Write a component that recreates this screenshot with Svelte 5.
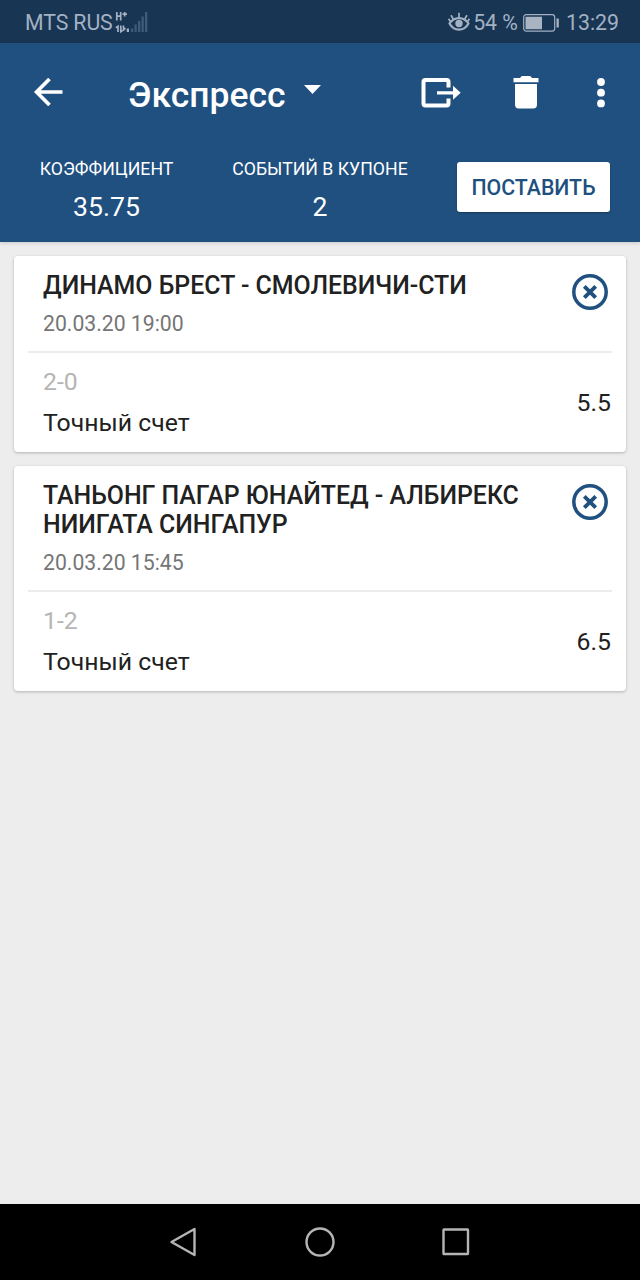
<script lang="ts">
  type Bet = {
    id: number;
    match: string;
    date: string;
    outcome: string;
    market: string;
    odds: number;
  };

  let bets: Bet[] = $state([
    {
      id: 1,
      match: 'ДИНАМО БРЕСТ - СМОЛЕВИЧИ-СТИ',
      date: '20.03.20 19:00',
      outcome: '2-0',
      market: 'Точный счет',
      odds: 5.5
    },
    {
      id: 2,
      match: 'ТАНЬОНГ ПАГАР ЮНАЙТЕД - АЛБИРЕКС НИИГАТА СИНГАПУР',
      date: '20.03.20 15:45',
      outcome: '1-2',
      market: 'Точный счет',
      odds: 6.5
    }
  ]);

  // An express pays the product of all its odds.
  let total = $derived(bets.reduce((acc, bet) => acc * bet.odds, 1));

  function remove(id: number) {
    bets = bets.filter((bet) => bet.id !== id);
  }
</script>

<div class="screen">
  <div class="status">
    <span class="carrier">MTS RUS</span>
    <svg class="signal" width="33" height="22" viewBox="0 0 33 22" aria-hidden="true">
      <g fill="none" stroke="#a3b1c3" stroke-width="1.7">
        <path d="M1.800 1v8.500M5.700 1v8.500M1.800 5.200h4M7.500 3.200h4.500M9.700 1v4.500" />
        <path d="M.8 16.700l2.200-1.400v5.700M5.800 14.500v6.200l1.700-1.200M8.500 14.500v5.500M8.500 17l2 1" />
      </g>
      <path d="M11.700 17.500h2.300v3.500h-2.300z" fill="#a3b1c3" />
      <path
        d="M16 17.500h2.200v3.500h-2.200zM19.500 13.500h2.200v7.500h-2.200zM23 10h2.300v11h-2.300zM26.500 5.500h2.300v15.500h-2.300zM30 1h2.300v20h-2.300z"
        fill="#3f5b79"
      />
    </svg>
    <span class="spacer"></span>
    <svg class="eye" width="22" height="20" viewBox="0 0 22 20" aria-hidden="true">
      <g fill="none" stroke="#a3b1c3" stroke-width="2.200">
        <path d="M1.500 11.500C6 4.200 16 4.200 20.500 11.500C16 19.700 6 19.700 1.500 11.500z" />
        <path d="M11 5.500V.8M5.300 7L3 3.200M16.700 7L19 3.200M2.500 9.800L.6 6.800M19.500 9.800l1.900-3" stroke-width="1.700" />
      </g>
      <circle cx="11" cy="11.500" r="3.700" fill="#a3b1c3" />
    </svg>
    <span>54 %</span>
    <svg class="battery" width="37" height="18" viewBox="0 0 37 18" aria-hidden="true">
      <rect x=".7" y=".7" width="31" height="16.400" rx="2.500" fill="none" stroke="#a3b1c3" stroke-width="1.200" />
      <path d="M2.500 2.700h16.500v12.500h-16.500zM33.500 4.500h2.300v9h-2.300z" fill="#a9b4c3" />
    </svg>
    <span>13:29</span>
  </div>

  <header>
    <div class="toolbar">
      <button class="icon back" type="button" aria-label="Назад">
        <svg width="29" height="28" viewBox="0 0 29 28">
          <path d="M28.500 14H2.500M15.500 1L2.500 14l13 13" fill="none" stroke="#fff" stroke-width="3.700" />
        </svg>
      </button>
      <h1>Экспресс</h1>
      <svg class="caret" width="17" height="9" viewBox="0 0 17 9" aria-hidden="true">
        <path d="M0 0h17L8.500 9z" fill="#fff" />
      </svg>
      <span class="spacer"></span>
      <button class="icon share" type="button" aria-label="Поделиться">
        <svg width="40" height="30" viewBox="0 0 40 30">
          <path d="M27.500 9.500V4q0-2-2-2H4.500q-2 0-2 2v21.500q0 2 2 2h21q2 0 2-2V20.500" fill="none" stroke="#fff" stroke-width="4" />
          <path d="M16 13.200h16V7.800l7.700 7-7.700 7v-5.400H16z" fill="#fff" />
        </svg>
      </button>
      <button class="icon trash" type="button" aria-label="Удалить">
        <svg width="26" height="33" viewBox="0 0 26 33">
          <path d="M.5 2h6.500l1.800-2h8.400L19 2h6.500v4.200H.5zM2 8h22v20.800q0 3.700-3.700 3.700H5.700Q2 32.500 2 28.800z" fill="#fff" />
        </svg>
      </button>
      <button class="icon more" type="button" aria-label="Ещё">
        <svg width="8" height="30" viewBox="0 0 8 30">
          <g fill="#fff">
            <circle cx="4" cy="4" r="3.900" />
            <circle cx="4" cy="14.700" r="3.900" />
            <circle cx="4" cy="25.400" r="3.900" />
          </g>
        </svg>
      </button>
    </div>

    <div class="summary">
      <div class="stat">
        <span class="label">КОЭФФИЦИЕНТ</span>
        <span class="value">{total.toFixed(2)}</span>
      </div>
      <div class="stat">
        <span class="label">СОБЫТИЙ В КУПОНЕ</span>
        <span class="value">{bets.length}</span>
      </div>
      <button class="place" type="button">ПОСТАВИТЬ</button>
    </div>
  </header>

  <main>
    {#each bets as bet (bet.id)}
      <article>
        <div class="event">
          <div>
            <h2>{bet.match}</h2>
            <p class="date">{bet.date}</p>
          </div>
          <button class="icon remove" type="button" aria-label="Убрать" onclick={() => remove(bet.id)}>
            <svg width="36" height="36" viewBox="0 0 36 36">
              <g fill="none" stroke="#20507f">
                <circle cx="18" cy="18" r="16.200" stroke-width="3.500" />
                <path d="M12.300 12.300l11.400 11.400M23.700 12.300L12.300 23.700" stroke-width="3.800" />
              </g>
            </svg>
          </button>
        </div>
        <div class="pick">
          <div>
            <p class="outcome">{bet.outcome}</p>
            <p>{bet.market}</p>
          </div>
          <span>{bet.odds}</span>
        </div>
      </article>
    {/each}
  </main>

  <nav>
    <svg width="28" height="30" viewBox="0 0 28 30" aria-hidden="true">
      <path d="M25.500 2v26L2.500 15z" />
    </svg>
    <svg width="30" height="30" viewBox="0 0 30 30" aria-hidden="true">
      <circle cx="15" cy="15" r="13.500" />
    </svg>
    <svg width="28" height="28" viewBox="0 0 28 28" aria-hidden="true">
      <rect x="1.500" y="1.500" width="24.500" height="24.500" rx=".5" />
    </svg>
  </nav>
</div>

<style>
  .screen {
    display: flex;
    flex-direction: column;
    width: 640px;
    height: 1280px;
    overflow: hidden;
    background: #ededed;
    color: #212121;
    font-family: Roboto, 'Noto Sans', sans-serif;
  }

  svg {
    display: block;
    flex: none;
  }

  h1,
  h2,
  p {
    margin: 0;
  }

  button {
    padding: 0;
    border: none;
    background: none;
    font-family: inherit;
    cursor: pointer;
  }

  .spacer {
    flex: 1;
  }

  .status {
    display: flex;
    align-items: center;
    flex: none;
    box-sizing: border-box;
    height: 43px;
    padding: 2px 21px 0 25px;
    background: #183554;
    color: #a3b1c3;
    font-size: 21.3px;
    white-space: nowrap;
  }

  .carrier {
    letter-spacing: -0.1px;
  }

  .signal {
    margin: -2px 0 0 2px;
  }

  .eye {
    margin: -1px 3px 0 0;
  }

  .battery {
    margin: 0 6px 0 5px;
  }

  header {
    position: relative;
    flex: none;
    box-sizing: border-box;
    height: 199px;
    background: #20507f;
    color: #fff;
    box-shadow: 0 1px 4px rgba(0, 0, 0, 0.16);
  }

  .toolbar {
    display: flex;
    align-items: center;
    box-sizing: border-box;
    height: 99px;
    padding: 0 35px 0 34px;
  }

  .back {
    margin-top: -2px;
  }

  h1 {
    margin: 5px 0 0 65px;
    font-size: 35.5px;
    font-weight: 500;
    line-height: 42px;
  }

  .caret {
    margin: -6px 0 0 18px;
  }

  .trash {
    margin-left: 52px;
  }

  .more {
    margin-left: 58px;
  }

  .summary {
    display: grid;
    grid-template-columns: 213px 214px 153px;
    align-items: start;
    padding-top: 17px;
  }

  .stat {
    display: flex;
    flex-direction: column;
    align-items: center;
    gap: 11px;
  }

  .label {
    font-size: 17.7px;
    line-height: 21px;
  }

  .value {
    font-size: 26.6px;
    line-height: 31px;
  }

  .place {
    height: 50px;
    margin: 3px 0 0 30px;
    width: 153px;
    border-radius: 3px;
    background: #fff;
    color: #20507f;
    font-size: 21.3px;
    font-weight: 500;
    box-shadow: 0 1px 2px rgba(0, 0, 0, 0.3);
  }

  main {
    display: flex;
    flex: 1;
    flex-direction: column;
    gap: 14px;
    padding: 14px;
  }

  article {
    padding: 15px 14px 15px;
    border-radius: 4px;
    background: #fff;
    box-shadow: 0 1px 3px rgba(0, 0, 0, 0.25);
  }

  .event {
    display: flex;
    justify-content: space-between;
    padding: 0 4px 15px 15px;
    border-bottom: 2px solid #ececec;
  }

  h2 {
    width: 500px;
    font-size: 24.9px;
    font-weight: 500;
    line-height: 29px;
  }

  .date {
    margin-top: 11px;
    color: #757575;
    font-size: 21.2px;
    line-height: 25px;
  }

  .remove {
    align-self: flex-start;
    margin-top: 3px;
  }

  .pick {
    display: flex;
    align-items: center;
    justify-content: space-between;
    padding: 14px 1px 0 15px;
    font-size: 24.8px;
    line-height: 29px;
  }

  .outcome {
    margin-bottom: 12px;
    color: #b5b5b5;
  }

  nav {
    display: flex;
    align-items: center;
    flex: none;
    gap: 108px;
    height: 76px;
    padding-left: 169px;
    background: #000;
  }

  nav svg {
    fill: none;
    stroke: #b5b5b5;
    stroke-width: 2.4;
    stroke-linejoin: round;
  }

  nav svg:last-child {
    margin-left: -1px;
  }
</style>
